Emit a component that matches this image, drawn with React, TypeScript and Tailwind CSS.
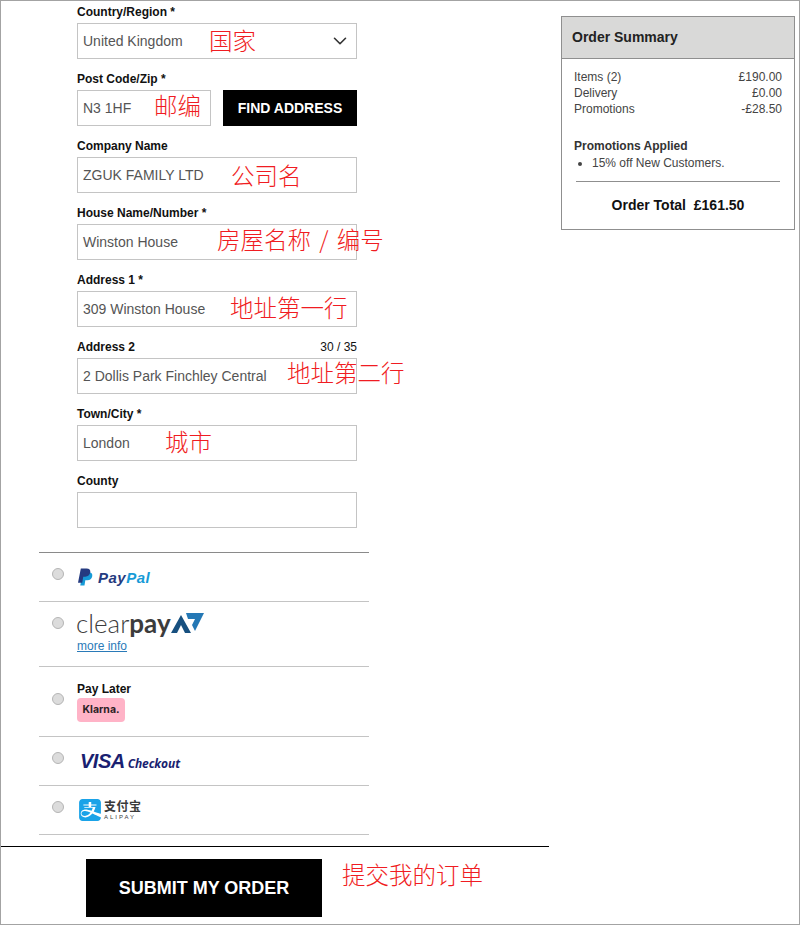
import { ChevronDown } from 'lucide-react'
import { SiAlipay } from 'react-icons/si'
import type { ReactNode } from 'react'

const ZH = 'absolute top-1/2 -translate-y-1/2 whitespace-nowrap text-[23.5px] leading-none text-[#f01c22] font-["Noto_Sans_CJK_SC",sans-serif] font-light'

type FieldProps = {
  label: string
  value?: string
  note?: string
  left?: string
  counter?: string
}

function Note({ text, left }: { text: string; left: string }) {
  return <span className={`${ZH} ${left}`}>{text}</span>
}

function Field({ label, value, note, left, counter }: FieldProps) {
  return (
    <div className="mb-[11px] w-[280px]">
      <div className="flex h-[20px] items-start justify-between text-[12px] font-bold leading-[19px] text-[#111]">
        <span>{label}</span>
        {counter && <span className="font-normal">{counter}</span>}
      </div>
      <div className="relative flex h-[36px] items-center border border-[#c4c4c4] px-[5px] text-[14px] text-[#555]">
        {value}
        {note && left && <Note text={note} left={left} />}
      </div>
    </div>
  )
}

function PaymentRow({ children, center, h }: { children: ReactNode; center?: boolean; h: string }) {
  return (
    <div className={`flex border-b border-[#c4c4c4] ${h} ${center ? 'items-center' : 'items-start pt-[15px]'}`}>
      <input
        type="radio"
        className={`ml-[13px] mr-[13px] block h-[12px] w-[12px] shrink-0 appearance-none rounded-full border border-[#b5b5b5] bg-[#dcdcdc] ${center ? '-mt-[6px]' : ''}`}
      />
      {children}
    </div>
  )
}

function PayPalLogo() {
  return (
    <div className="-mt-[2px] ml-[1px] flex items-center gap-[5px]">
      <svg width="15" height="19" viewBox="0 0 16 19">
        <path d="M5 4h6.5c2.6 0 4.2 1.5 3.7 4.1-.5 2.9-2.5 4.4-5.2 4.4H7.8L6.9 18H2.4z" fill="#179bd7" />
        <path d="M3 0h6.2c2.8 0 4.4 1.4 3.9 4-.5 3-2.5 4.6-5.4 4.6H5.6L4.5 15H0z" fill="#253b80" />
      </svg>
      <span className="mt-[1px] text-[15px] font-bold italic tracking-[0.5px]">
        <span className="text-[#253b80]">Pay</span>
        <span className="text-[#179bd7]">Pal</span>
      </span>
    </div>
  )
}

function ClearpayLogo() {
  return (
    <div className="-ml-[1px] -mt-[8px]">
      <div className="flex h-[28px] items-center">
        <span className="font-['Lato',sans-serif] text-[26px] font-light leading-none text-[#3c3c3c]">clear</span>
        <span className="font-['Lato',sans-serif] text-[26px] font-bold leading-none text-[#3c3c3c]">pay</span>
        <svg width="33" height="22" viewBox="0 0 33 22">
          <path d="M0 21 10 3l10 18h-6l-4-8-4 8z" fill="#17507f" />
          <path d="M15 1h18l-9 18-3-6 3-6h-7z" fill="#2478b5" />
        </svg>
      </div>
      <a className="ml-[1px] mt-[2px] block text-[12px] leading-[14px] text-[#2a7ab8] underline">more info</a>
    </div>
  )
}

export default function App() {
  return (
    <div className="box-border flex h-[925px] w-[800px] overflow-hidden border border-[#a3a3a3] bg-white font-['Liberation_Sans',Arial,sans-serif]">
      <div className="w-[548px] shrink-0">
        <div className="pl-[76px] pt-[2px]">
          <div className="mb-[11px] w-[280px]">
            <div className="h-[20px] text-[12px] font-bold leading-[19px] text-[#111]">Country/Region *</div>
            <div className="relative flex h-[36px] items-center justify-between border border-[#c4c4c4] pl-[5px] pr-[5px] text-[14px] text-[#555]">
              United Kingdom
              <ChevronDown size={22} strokeWidth={1.75} className="text-[#333]" />
              <Note text="国家" left="left-[131px]" />
            </div>
          </div>

          <div className="mb-[11px] w-[280px]">
            <div className="h-[20px] text-[12px] font-bold leading-[19px] text-[#111]">Post Code/Zip *</div>
            <div className="flex justify-between">
              <div className="relative flex h-[36px] w-[134px] items-center border border-[#c4c4c4] px-[5px] text-[14px] text-[#555]">
                N3 1HF
                <Note text="邮编" left="left-[76px] -mt-[2px]" />
              </div>
              <button className="h-[36px] w-[134px] bg-black text-[14px] font-bold text-white">FIND ADDRESS</button>
            </div>
          </div>

          <Field label="Company Name" value="ZGUK FAMILY LTD" note="公司名" left="left-[153px] mt-[1px]" />
          <Field label="House Name/Number *" value="Winston House" note="房屋名称 / 编号" left="left-[139px] -mt-[2px] [word-spacing:3px]" />
          <Field label="Address 1 *" value="309 Winston House" note="地址第一行" left="left-[152px] -mt-[1px]" />
          <Field label="Address 2" counter="30 / 35" value="2 Dollis Park Finchley Central" note="地址第二行" left="left-[209px] -mt-[3px]" />
          <Field label="Town/City *" value="London" note="城市" left="left-[87px] -mt-[1px]" />
          <Field label="County" />
        </div>

        <div className="ml-[38px] mt-[24px] w-[330px] border-t border-[#8a8a8a]">
          <PaymentRow h="h-[49px]">
            <PayPalLogo />
          </PaymentRow>
          <PaymentRow h="h-[65px]">
            <ClearpayLogo />
          </PaymentRow>
          <PaymentRow h="h-[70px]" center>
            <div>
              <div className="text-[12px] font-bold leading-[16px] text-[#111]">Pay Later</div>
              <div className="mt-[1px] flex h-[24px] w-[48px] items-center justify-center rounded-[4px] bg-[#ffb3c7] font-['Inter',sans-serif] text-[10.5px] font-bold text-[#2b1e24]">
                Klarna.
              </div>
            </div>
          </PaymentRow>
          <PaymentRow h="h-[49px]">
            <div className="-mt-[3px] ml-[3px] flex items-baseline gap-[3px] text-[#1a1f71]">
              <span className="text-[20px] font-bold italic leading-[24px] tracking-[-0.5px]">VISA</span>
              <span className="font-['Open_Sans',sans-serif] text-[12px] font-bold italic tracking-[-0.1px]">Checkout</span>
            </div>
          </PaymentRow>
          <PaymentRow h="h-[49px]">
            <div className="-mt-[2px] ml-[2px] flex items-center gap-[3px]">
              <SiAlipay size={22} className="text-[#1aa3e8]" />
              <div className="text-[#3a3a3a]">
                <div className="font-['Noto_Sans_CJK_SC',sans-serif] text-[12px] font-bold leading-[14px] tracking-[0.5px]">支付宝</div>
                <div className="text-[6px] leading-[8px] tracking-[2px]">ALIPAY</div>
              </div>
            </div>
          </PaymentRow>
        </div>

        <div className="mt-[11px] border-t border-black pl-[85px] pt-[12px]">
          <div className="relative h-[58px] w-[236px]">
            <button className="h-full w-full bg-black pt-[1px] text-[18px] font-bold text-white">SUBMIT MY ORDER</button>
            <span className="absolute left-[256px] top-[1px] whitespace-nowrap font-['Noto_Sans_CJK_SC',sans-serif] text-[23.5px] font-light leading-[28px] text-[#f01c22]">提交我的订单</span>
          </div>
        </div>
      </div>

      <div className="pl-[12px] pt-[15px]">
        <div className="box-border h-[214px] w-[234px] border border-[#8f8f8f] text-[12px] text-[#444]">
          <div className="flex h-[42px] items-center border-b border-[#8f8f8f] bg-[#d9d9d8] pl-[10px] text-[14px] font-bold text-[#222]">
            Order Summary
          </div>
          <div className="px-[12px] pt-[10px]">
            <div className="flex justify-between leading-[16px]"><span>Items (2)</span><span>£190.00</span></div>
            <div className="flex justify-between leading-[16px]"><span>Delivery</span><span>£0.00</span></div>
            <div className="flex justify-between leading-[16px]"><span>Promotions</span><span>-£28.50</span></div>
            <div className="mt-[21px] font-bold leading-[16px] text-[#333]">Promotions Applied</div>
            <ul className="ml-[18px] list-disc leading-[18px]">
              <li>15% off New Customers.</li>
            </ul>
            <div className="mx-[2px] mt-[9px] border-t border-[#8f8f8f]" />
            <div className="mt-[14px] text-center text-[14px] font-bold leading-[18px] text-[#111]">Order Total&nbsp; £161.50</div>
          </div>
        </div>
      </div>
    </div>
  )
}
